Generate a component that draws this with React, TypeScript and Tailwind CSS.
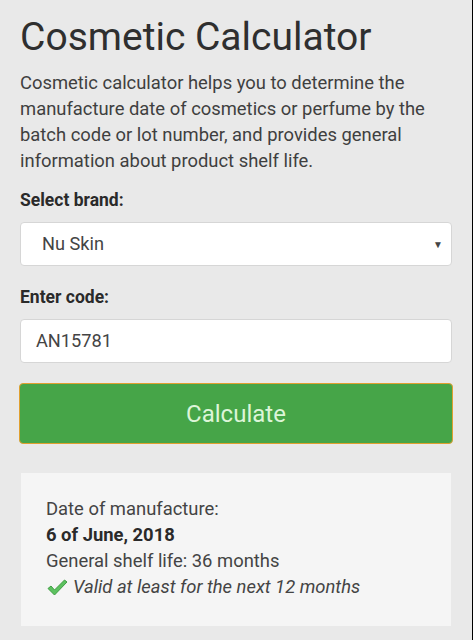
function CheckMark() {
  return (
    <svg width="22" height="18" viewBox="0 0 22 18" className="shrink-0">
      <path
        d="M2 10.5 L5 8 L8.5 12 L18.5 2 L21 4 L8.5 17 Z"
        fill="#5cc15f"
        stroke="#3f9e43"
        strokeWidth="1"
        strokeLinejoin="round"
      />
    </svg>
  );
}

export default function App() {
  return (
    <div className="flex min-h-[640px] w-[473px] bg-black font-['Roboto',sans-serif]">
      <div className="w-[472px] bg-[#e9e9e9] px-[20px] pt-[14px] pb-[14px] text-[#333]">
        <h1 className="text-[39px] leading-[46px] font-normal text-[#2f2f2f]">Cosmetic Calculator</h1>

        <p className="mt-[10px] text-[18.4px] leading-[26px] text-[#3f3f3f]">
          Cosmetic calculator helps you to determine the manufacture date of cosmetics or perfume by the
          batch code or lot number, and provides general information about product shelf life.
        </p>

        <label className="mt-[15px] block text-[17.5px] leading-[22px] font-bold text-[#2a2a2a]">Select brand:</label>
        <div className="mt-[11px] flex h-[44px] items-center justify-between rounded-[4px] border border-[#d6d6d6] bg-white pl-[21px] pr-[8px]">
          <span className="text-[18.2px] text-[#444]">Nu Skin</span>
          <span className="text-[10px] text-[#444]">▼</span>
        </div>

        <label className="mt-[20px] block text-[17.5px] leading-[22px] font-bold text-[#2a2a2a]">Enter code:</label>
        <div className="mt-[11px] flex h-[44px] items-center rounded-[4px] border border-[#d6d6d6] bg-white pl-[15px]">
          <span className="text-[18.2px] text-[#444]">AN15781</span>
        </div>

        <button className="mt-[20px] flex h-[61px] w-[434px] -ml-[1px] items-center justify-center rounded-[4px] border border-[#e0a030] bg-[#46a548] text-[24px] text-[#ddf5d8]">
          Calculate
        </button>

        <div className="mt-[29px] ml-[1px] w-[430px] bg-[#f5f5f5] px-[25px] pt-[23px] pb-[26px] text-[18.4px] leading-[26px] text-[#444]">
          <div>Date of manufacture:</div>
          <div className="font-bold text-[#2a2a2a]">6 of June, 2018</div>
          <div>General shelf life: 36 months</div>
          <div className="flex items-center gap-[5px] italic">
            <CheckMark />
            <span>Valid at least for the next 12 months</span>
          </div>
        </div>
      </div>
    </div>
  );
}
